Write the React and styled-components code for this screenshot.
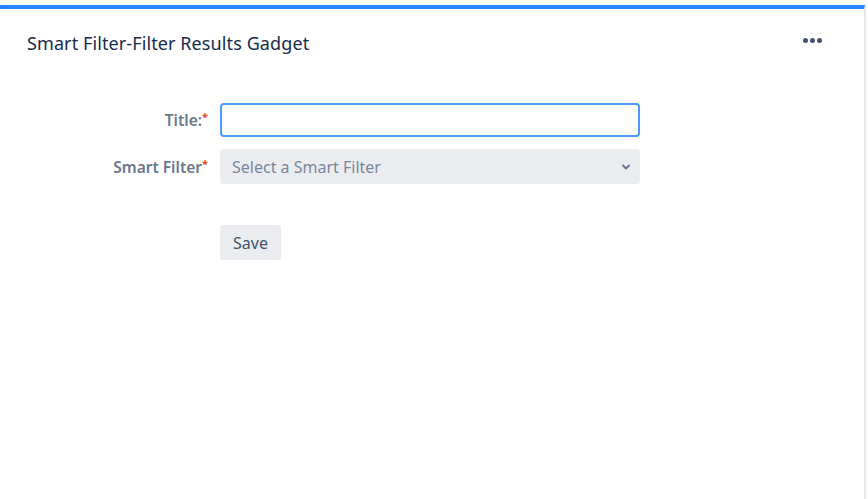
import React from "react";
import styled, { createGlobalStyle } from "styled-components";

const Global = createGlobalStyle`
  html, body { margin: 0; padding: 0; background: #fff; }
  body { font-family: "Noto Sans", "Open Sans", sans-serif; }
`;

const Page = styled.div`
  width: 868px;
  height: 499px;
  padding-top: 5px;
  box-sizing: border-box;
  background: #fff;
  overflow: hidden;
`;

const Card = styled.div`
  width: 865px;
  height: 494px;
  box-sizing: border-box;
  border-top: 4px solid #2684FF;
  border-right: 1px solid #e4e6ea;
  box-shadow: 1px 0 1px rgba(9, 30, 66, 0.08);
  background: #fff;
`;

const Header = styled.div`
  display: flex;
  align-items: center;
  justify-content: space-between;
  height: 68px;
  padding: 0 42px 0 27px;
`;

const Title = styled.h2`
  margin: 0;
  font-size: 18px;
  font-weight: 400;
  color: #172b4d;
  letter-spacing: 0.1px;
`;

const Dots = styled.div`
  display: flex;
  gap: 2px;
  margin-top: -6px;
  span {
    width: 5px;
    height: 5px;
    border-radius: 50%;
    background: #42526e;
  }
`;

const Form = styled.form`
  display: grid;
  grid-template-columns: 208px 420px;
  column-gap: 12px;
  row-gap: 12px;
  padding-top: 26px;
  align-items: center;
`;

const Label = styled.label`
  justify-self: end;
  font-size: 15.5px;
  font-weight: 600;
  color: #6b778c;
  .req {
    color: #de350b;
    font-size: 11px;
    position: relative;
    top: -5px;
  }
`;

const Input = styled.input`
  height: 34px;
  box-sizing: border-box;
  border: 2px solid #4c9aff;
  border-radius: 4px;
  outline: none;
  background: #fff;
  font: inherit;
`;

const Select = styled.div`
  height: 35px;
  box-sizing: border-box;
  border-radius: 3px;
  background: #ebecf0;
  display: flex;
  align-items: center;
  justify-content: space-between;
  padding: 0 6px 0 12px;
  font-size: 16px;
  color: #7a869a;
`;

const Spacer = styled.div`
  grid-column: 1 / span 2;
  height: 17px;
`;

const Button = styled.button`
  grid-column: 2;
  justify-self: start;
  height: 35px;
  padding: 0 13px;
  border: none;
  border-radius: 3px;
  background: #ebecf0;
  color: #42526e;
  font-family: inherit;
  font-size: 16px;
`;

export default function App() {
  return (
    <>
      <Global />
      <Page>
        <Card>
          <Header>
            <Title>Smart Filter-Filter Results Gadget</Title>
            <Dots>
              <span />
              <span />
              <span />
            </Dots>
          </Header>
          <Form onSubmit={(e) => e.preventDefault()}>
            <Label>
              Title:<span className="req">*</span>
            </Label>
            <Input />
            <Label>
              Smart Filter<span className="req">*</span>
            </Label>
            <Select>
              <span>Select a Smart Filter</span>
              <svg width="16" height="16" viewBox="0 0 16 16">
                <path d="M5 6.5l3 3 3-3" fill="none" stroke="#6b778c" strokeWidth="2" strokeLinecap="round" strokeLinejoin="round" />
              </svg>
            </Select>
            <Spacer />
            <Button type="button">Save</Button>
          </Form>
        </Card>
      </Page>
    </>
  );
}
